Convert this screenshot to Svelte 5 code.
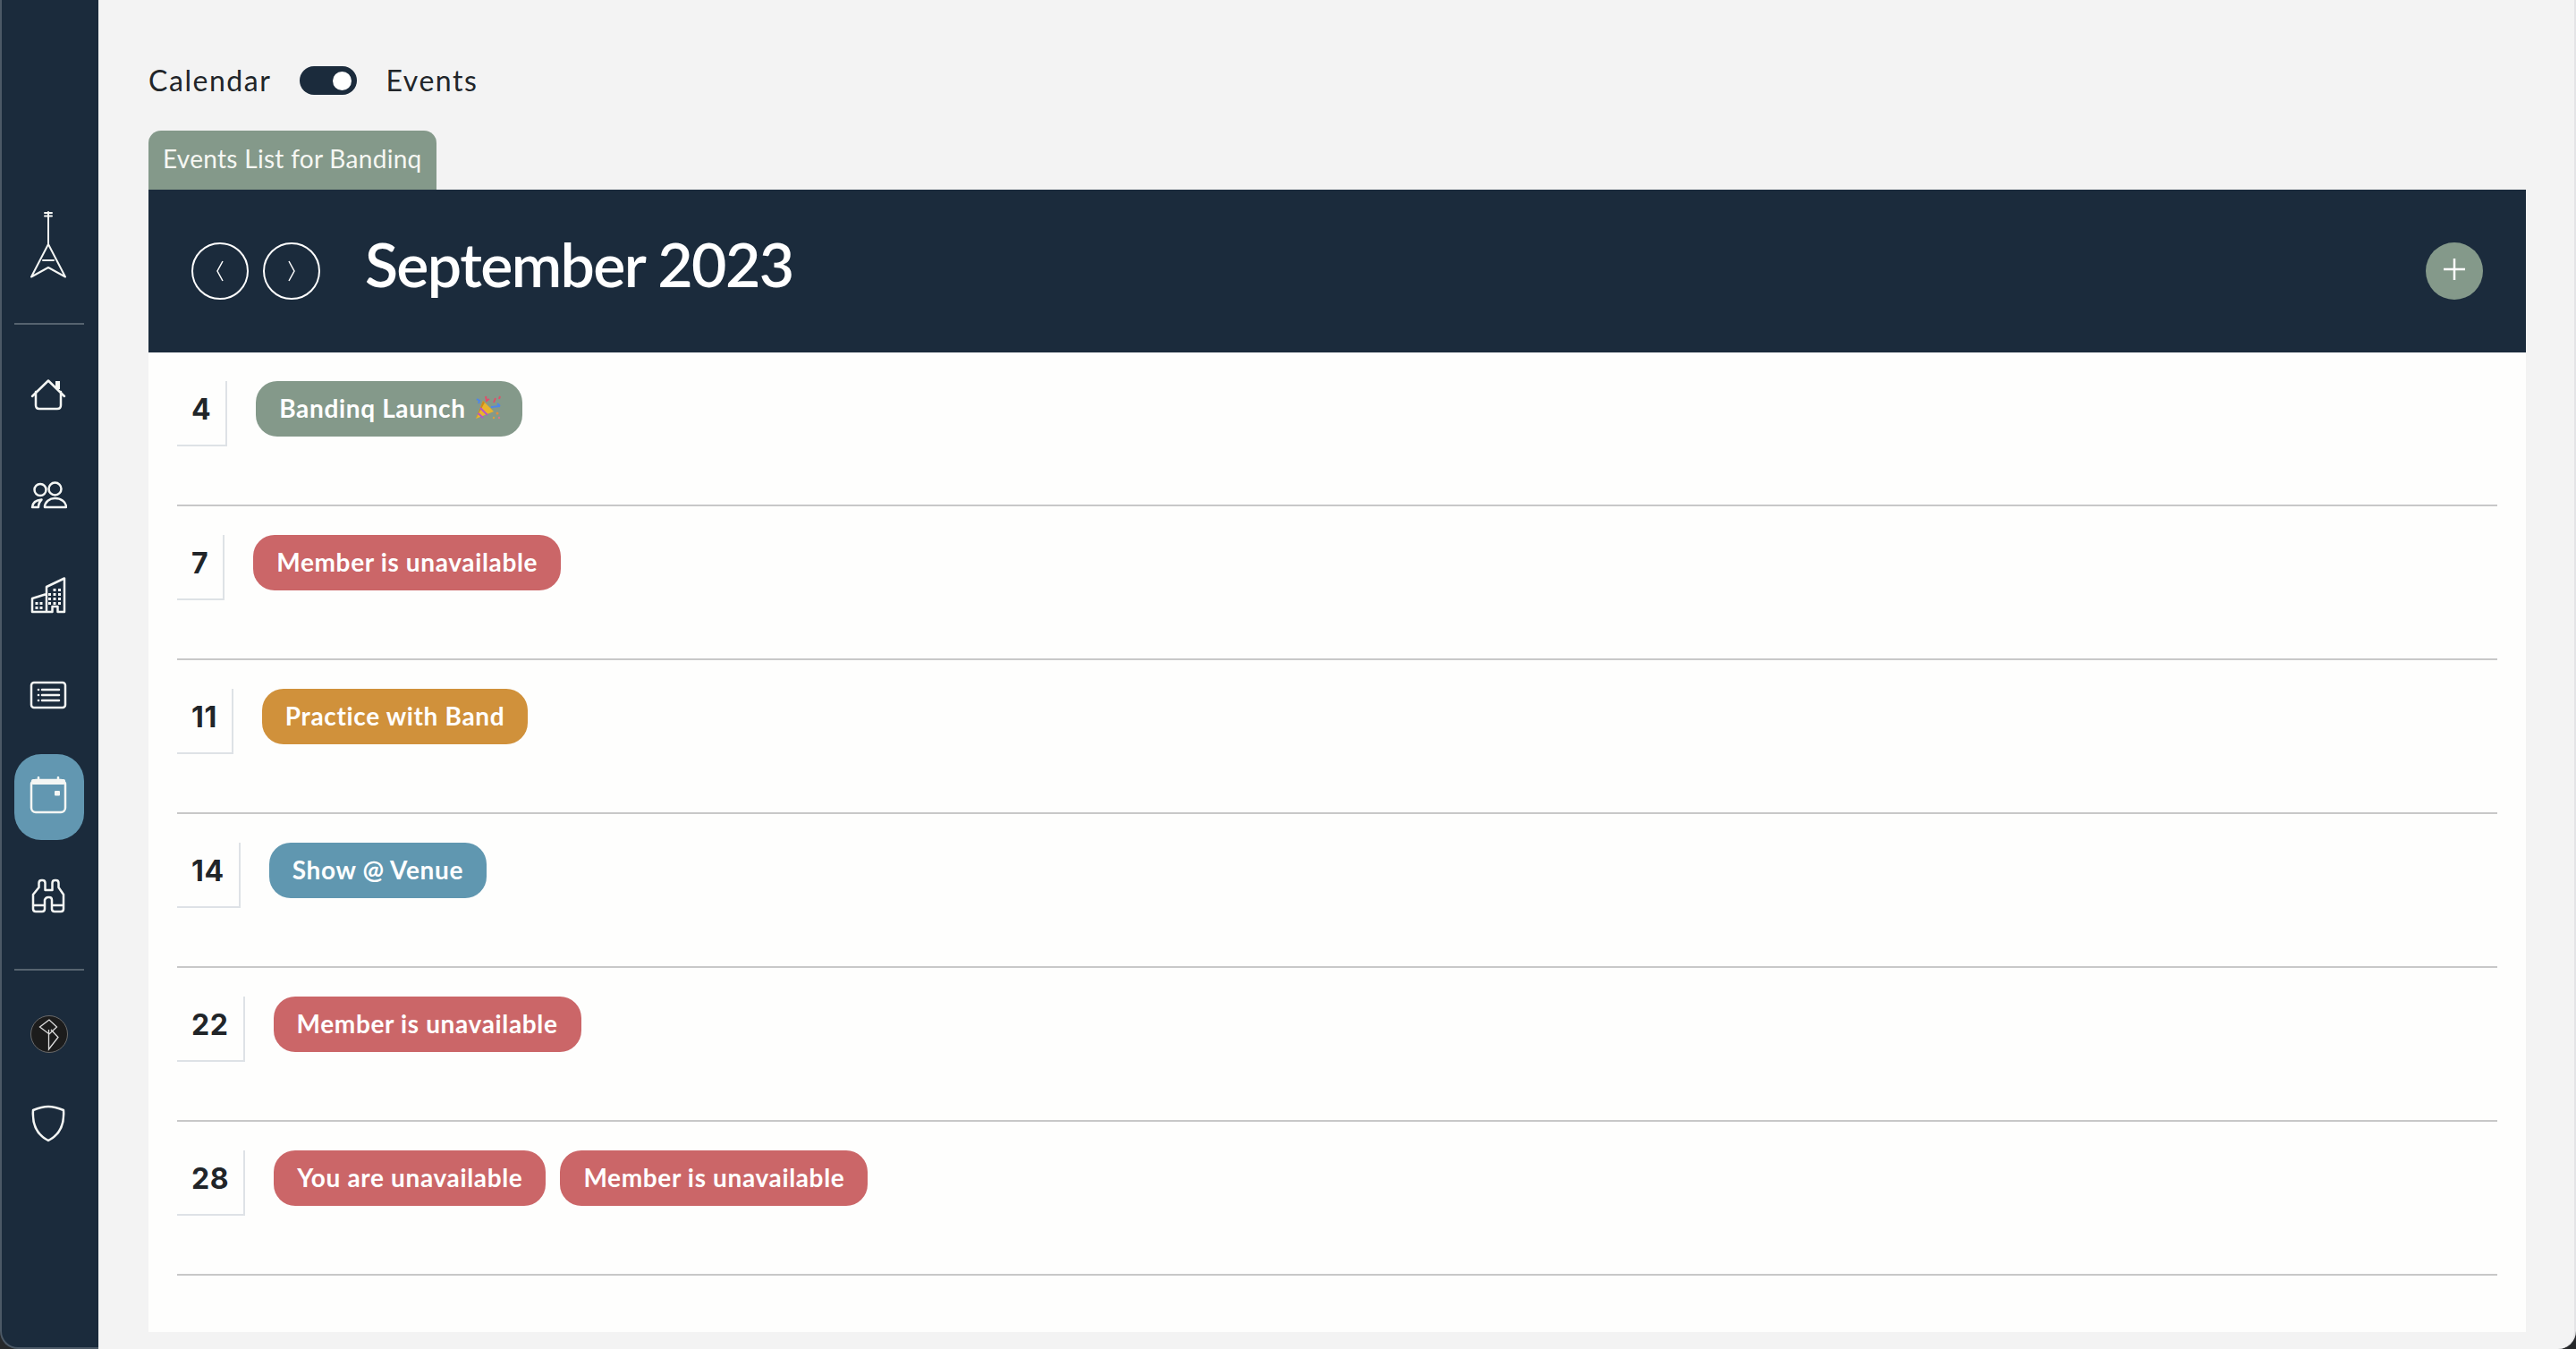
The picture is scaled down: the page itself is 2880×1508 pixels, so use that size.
<script lang="ts">
	const rows = [
		{ day: 4, events: [{ label: 'Bandinq Launch', tone: 'sage', party: true }] },
		{ day: 7, events: [{ label: 'Member is unavailable', tone: 'red' }] },
		{ day: 11, events: [{ label: 'Practice with Band', tone: 'orange' }] },
		{ day: 14, events: [{ label: 'Show @ Venue', tone: 'blue' }] },
		{ day: 22, events: [{ label: 'Member is unavailable', tone: 'red' }] },
		{
			day: 28,
			events: [
				{ label: 'You are unavailable', tone: 'red' },
				{ label: 'Member is unavailable', tone: 'red' }
			]
		}
	];

	const towerWindows = [
		[60, 658], [65.5, 658],
		[54.5, 663], [60, 663], [65.5, 663],
		[54.5, 668], [60, 668], [65.5, 668],
		[54.5, 673], [60, 673], [65.5, 673],
		[40, 673], [45, 673], [40, 678], [45, 678]
	];
</script>

<div class="app">
	<aside class="sidebar">
		<div class="brand">
			<svg class="icon thin" width="42" height="76" viewBox="33 235 42 76">
				<path d="M54 237v36M50 238h8M50 241.500h8M54 273L35 309.500L54 299L73 309.500ZM48 291h12" />
			</svg>
		</div>
		<div class="rule"></div>
		<nav class="nav">
			<a class="slot" href="#home" aria-label="Home">
				<svg class="icon" width="40" height="36" viewBox="34 423 40 36">
					<path d="M36 443L54 425.500L72 443M40 438v15q0 4 4 4h20q4 0 4-4v-15" />
					<rect class="solid" x="62" y="426" width="5" height="9" />
				</svg>
			</a>
			<a class="slot" href="#people" aria-label="Members">
				<svg class="icon" width="42" height="32" viewBox="33 536 42 32">
					<circle cx="45" cy="546.500" r="6.500" />
					<circle cx="61.500" cy="545.500" r="7" />
					<path d="M36 566C36.500 561 40 558 46.500 557.500C44 560 43 563 43 566ZM50 566C50 560 55.500 556 61.500 556C68 556 74 560 74 566Z" />
				</svg>
			</a>
			<a class="slot" href="#venues" aria-label="Venues">
				<svg class="icon" width="40" height="42" viewBox="33 644 40 42">
					<path d="M35 684V669L51 664M51 684V656L71 646.500V684H63.500V678H57.500V684ZM35 684H51" />
					{#each towerWindows as [x, y]}
						<rect class="solid" x={x - 1.5} {y} width="3" height="3" />
					{/each}
				</svg>
			</a>
			<a class="slot" href="#lists" aria-label="Lists">
				<svg class="icon" width="42" height="32" viewBox="33 761 42 32">
					<rect x="35" y="763" width="38" height="28" rx="3" />
					<path d="M47 771h19M47 777h19M47 783h19" />
					<circle class="solid" cx="43" cy="771" r="1.300" />
					<circle class="solid" cx="43" cy="777" r="1.300" />
					<circle class="solid" cx="43" cy="783" r="1.300" />
				</svg>
			</a>
			<a class="slot active" href="#calendar" aria-label="Calendar">
				<svg class="icon" width="42" height="42" viewBox="33 868 42 42">
					<rect x="35" y="872" width="38" height="36" rx="5" />
					<path d="M43 869v5M65 869v5" />
					<rect class="solid" x="35" y="871" width="38" height="6" rx="2" />
					<rect class="solid" x="61" y="884" width="6" height="5.500" rx="1" />
				</svg>
			</a>
			<a class="slot" href="#search" aria-label="Discover">
				<svg class="icon" width="38" height="39" viewBox="35 982 38 39">
					<path d="M43.500 992V987q0-3 3-3h1q3 0 3 3v8h8V987q0-3 3-3h1q3 0 3 3v5L71 1000V1016q0 3-3 3h-7q-3 0-3-3V1006q0-3-3-3h-1q-3 0-4 3V1016q0 3-3 3h-7q-3 0-3-3V1000ZM37 1012h13M58 1012h13" />
				</svg>
			</a>
		</nav>
		<div class="rule second"></div>
		<svg class="logo" width="44" height="44" viewBox="33 1133 44 44">
			<circle class="disc" cx="55" cy="1155" r="20.500" />
			<path class="mark" d="M55 1139L44.500 1147L55 1155L63.500 1147ZM54.500 1150V1172L65 1158.500L57 1150" />
		</svg>
		<svg class="icon shield" width="40" height="42" viewBox="34 1235 40 42">
			<path d="M54 1237C60 1237 66 1239 71 1241C72 1255 68 1268 54 1275C40 1268 36 1255 37 1241C42 1239 48 1237 54 1237Z" />
		</svg>
	</aside>

	<main class="main">
		<div class="view-switch">
			<span>Calendar</span>
			<span class="toggle"><span class="knob"></span></span>
			<span>Events</span>
		</div>
		<div class="tab">Events List for Bandinq</div>
		<header class="month-bar">
			<button class="round" aria-label="Previous month">
				<svg width="10" height="24" viewBox="0 0 10 24"><path d="M8 1L2 12L8 23" /></svg>
			</button>
			<button class="round" aria-label="Next month">
				<svg width="10" height="24" viewBox="0 0 10 24"><path d="M2 1L8 12L2 23" /></svg>
			</button>
			<h1>September 2023</h1>
			<button class="add" aria-label="Add event">
				<svg width="24" height="24" viewBox="0 0 24 24"><path d="M12 0V24M0 12H24" /></svg>
			</button>
		</header>
		<section class="list">
			{#each rows as row}
				<div class="row">
					<div class="date">{row.day}</div>
					{#each row.events as event}
						<span class="pill {event.tone}">
							{event.label}
							{#if event.party}
								<svg class="party" width="32" height="30" viewBox="526 440 32 30">
									<path fill="#e9b42c" d="M528 467L536 447L548 459Z" />
									<path fill="#c98a1e" d="M528 467L536 447L538 449Z" />
									<path fill="none" stroke="#b655c8" stroke-width="2" d="M533 455L541 463M530.500 461L536 466" />
									<path fill="none" stroke="#4f86e8" stroke-width="2" d="M529 445l3 2l-1 3M545 454l10-1M552 450l3 3" />
									<path fill="none" stroke="#df4f6a" stroke-width="2" d="M539 442l1 5l3-2M550 444l-2 5M555 442l-1 3" />
									<circle fill="#e58f3a" cx="552" cy="461" r="1.500" />
									<circle fill="#d9a13a" cx="548" cy="466" r="1.200" />
									<circle fill="#d8768a" cx="554" cy="466" r="1.200" />
								</svg>
							{/if}
						</span>
					{/each}
				</div>
			{/each}
		</section>
	</main>
</div>

<style>
	:global(body) {
		margin: 0;
	}

	.app {
		display: flex;
		height: 1508px;
		background: #26282a;
		font-family: Lato, 'Noto Sans', sans-serif;
		color: #212529;
		overflow: hidden;
	}

	.sidebar {
		box-sizing: border-box;
		width: 110px;
		flex-shrink: 0;
		display: flex;
		flex-direction: column;
		background: #1b2b3c;
		border-left: 2px solid #4c5966;
		border-bottom: 2px solid #4c5966;
		border-bottom-left-radius: 20px;
		padding: 0 16px 0 14px;
	}

	.brand {
		display: flex;
		justify-content: center;
		padding: 235px 2px 50px 0;
	}

	.rule {
		height: 2px;
		background: #56636f;
	}

	.rule.second {
		margin-bottom: 49px;
	}

	.nav {
		display: flex;
		flex-direction: column;
		gap: 16px;
		padding: 32px 0;
	}

	.slot {
		box-sizing: border-box;
		height: 96px;
		padding: 0 2px 4px 0;
		display: flex;
		align-items: center;
		justify-content: center;
		border-radius: 30px;
	}

	.slot.active {
		background: #6297b1;
	}

	.icon {
		fill: none;
		stroke: #f4f6f4;
		stroke-width: 2.5;
		stroke-linejoin: round;
		stroke-linecap: round;
		display: block;
	}

	.icon.thin {
		stroke-width: 2;
	}

	.icon .solid {
		fill: #f4f6f4;
		stroke: none;
	}

	.logo {
		display: block;
		align-self: center;
	}

	.disc {
		fill: #1c1c1c;
		stroke: #6a6a6a;
		stroke-width: 1;
	}

	.mark {
		fill: none;
		stroke: #dedede;
		stroke-width: 1.3;
	}

	.shield {
		margin: 57px 2px 0 0;
		align-self: center;
	}

	.main {
		flex: 1;
		min-width: 0;
		box-sizing: border-box;
		display: flex;
		flex-direction: column;
		padding: 74px 54px 19px 56px;
		background: #f3f3f3;
		border-right: 2px solid #e4e4e6;
		border-bottom-right-radius: 20px;
	}

	.view-switch {
		display: flex;
		align-items: center;
		gap: 32px;
		height: 32px;
		margin-bottom: 40px;
		font-size: 32px;
		font-weight: 400;
		line-height: 28px;
		letter-spacing: 1.55px;
	}

	.toggle {
		box-sizing: border-box;
		width: 64px;
		height: 32px;
		display: flex;
		align-items: center;
		justify-content: flex-end;
		padding-right: 6px;
		border-radius: 16px;
		background: #1b2b3c;
	}

	.knob {
		width: 21px;
		height: 21px;
		border-radius: 50%;
		background: #fff;
	}

	.tab {
		box-sizing: border-box;
		align-self: flex-start;
		height: 66px;
		padding: 13px 16px 0;
		border-radius: 14px 14px 0 0;
		background: #84998a;
		color: #f6f7f3;
		font-size: 28px;
		line-height: 36px;
		letter-spacing: 0.3px;
		white-space: nowrap;
	}

	.month-bar {
		height: 182px;
		flex-shrink: 0;
		display: flex;
		align-items: center;
		gap: 16px;
		padding: 0 48px;
		background: #1b2b3c;
	}

	.round {
		box-sizing: border-box;
		width: 64px;
		height: 64px;
		padding: 0;
		display: flex;
		align-items: center;
		justify-content: center;
		border: 2px solid #fff;
		border-radius: 50%;
		background: transparent;
	}

	.round path {
		fill: none;
		stroke: #fff;
		stroke-width: 1.5;
	}

	h1 {
		margin: 0 0 16px 34px;
		font-size: 68px;
		font-weight: 600;
		line-height: 1;
		letter-spacing: -1.6px;
		color: #fff;
		white-space: nowrap;
	}

	.add {
		width: 64px;
		height: 64px;
		padding: 0 0 4px;
		margin-left: auto;
		display: flex;
		align-items: center;
		justify-content: center;
		border: none;
		border-radius: 50%;
		background: #84998a;
	}

	.add path {
		stroke: #fff;
		stroke-width: 2.5;
	}

	.list {
		flex: 1;
		padding: 0 32px;
		background: #fefefd;
	}

	.row {
		box-sizing: border-box;
		height: 172px;
		display: flex;
		align-items: flex-start;
		gap: 16px;
		padding-top: 32px;
		border-bottom: 2px solid #c8c8c8;
	}

	.date {
		box-sizing: border-box;
		height: 73px;
		margin-right: 16px;
		padding: 8px 16px 0;
		border-right: 2px solid #dee2e6;
		border-bottom: 2px solid #dee2e6;
		font-family: Inter, sans-serif;
		font-size: 32px;
		font-weight: 700;
		line-height: 48px;
		letter-spacing: 0.6px;
	}

	.pill {
		box-sizing: border-box;
		height: 62px;
		display: flex;
		align-items: center;
		gap: 9px;
		padding: 0 26px 2px;
		border-radius: 24px;
		color: #fff;
		font-size: 28px;
		font-weight: 700;
		letter-spacing: 0.65px;
		white-space: nowrap;
	}

	.party {
		flex-shrink: 0;
		margin-right: -4px;
	}

	.sage {
		background: #84998a;
	}

	.red {
		background: #cb6668;
	}

	.orange {
		background: #d0913b;
	}

	.blue {
		background: #6097b0;
	}
</style>
